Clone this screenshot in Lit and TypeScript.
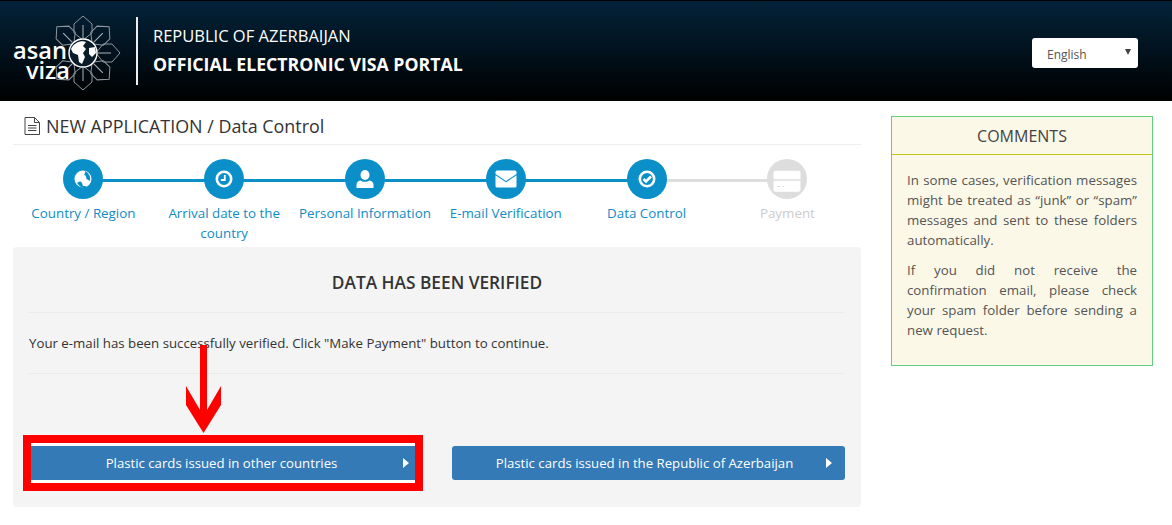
import { LitElement, html, css, svg } from "lit";
import { customElement } from "lit/decorators.js";

const petalAngles = [0, 45, 90, 135, 180, 225, 315];

const logo = html`<svg class="logo" width="136" height="100" viewBox="0 1 136 100">
  ${petalAngles.map(
    (a) => svg`<g transform="rotate(${a} 83 53)">
      <path d="M83 16 L92 24 V33 L83 40 L74 33 V24 Z" fill="none" stroke="#8d979e" stroke-width="1"/>
      <path d="M83 25 V38" stroke="#aeb6bb" stroke-width="1"/>
    </g>`
  )}
  <circle cx="83" cy="53" r="14" fill="#0b1c29" stroke="#fff" stroke-width="1.4"/>
  <path d="M71 49 C74 42 82 40 86 42 L83 46 L86 49 L83 53 L85 57 L82 64 L79 62 L78 55 L73 53 Z" fill="#fff"/>
  <path d="M89 48 L95 47 L96 53 L92 57 L89 54 Z" fill="#fff"/>
  <text x="13" y="59" class="logo-word" textLength="54" lengthAdjust="spacingAndGlyphs">asan</text>
  <text x="26" y="79" class="logo-word" textLength="44" lengthAdjust="spacingAndGlyphs">viza</text>
</svg>`;

const stepIcons = {
  globe: svg`<circle cx="12" cy="12" r="8.5" fill="#fff"/><path d="M14 4 C18 6 20 10 19 14 L15.5 12 C15 10 15 8 13 8 C14 6.500 14.500 5.500 14 4 Z M6 16 C8 14 10 14 11 16 L12 19 L15 19 L14 21 C11 21 8 19 6 16 Z" fill="#0a8fc9"/>`,
  clock: svg`<circle cx="12" cy="12" r="7.2" fill="none" stroke="#fff" stroke-width="2.6"/><path d="M12.800 8 V13 H8.800" fill="none" stroke="#fff" stroke-width="1.8"/>`,
  user: svg`<ellipse cx="12" cy="8" rx="4.500" ry="5" fill="#fff"/><path d="M3.500 21 V18 C3.500 15.500 5 14 7.500 13.500 C9 15.300 15 15.300 16.500 13.500 C19 14 20.500 15.500 20.500 18 V21 Z" fill="#fff"/>`,
  mail: svg`<path d="M1.500 5 Q1.500 3.500 3 3.500 H21 Q22.500 3.500 22.500 5 V7 L12 14 L1.500 7 Z M1.500 8.300 L12 15.300 L22.500 8.300 V19 Q22.500 20.500 21 20.500 H3 Q1.500 20.500 1.500 19 Z" fill="#fff"/>`,
  check: svg`<circle cx="12" cy="12" r="7.2" fill="none" stroke="#fff" stroke-width="2.6"/><path d="M8.500 12 L11 14.500 L16 9.500" fill="none" stroke="#fff" stroke-width="2.600"/>`,
  card: svg`<path d="M-1.500 5.700 Q-1.500 3.700 .5 3.700 H23.500 Q25.500 3.700 25.500 5.700 V12.300 H-1.500 Z M-1.500 13.700 H25.500 V22.700 Q25.500 24.700 23.500 24.700 H.5 Q-1.500 24.700 -1.500 22.700 Z" fill="#fff"/><path d="M2 19.500 H5 M7 19.500 H9" stroke="#ddd" stroke-width="1"/>`,
};

const steps = [
  { label: "Country / Region", icon: stepIcons.globe, on: true },
  { label: "Arrival date to the country", icon: stepIcons.clock, on: true },
  { label: "Personal Information", icon: stepIcons.user, on: true },
  { label: "E-mail Verification", icon: stepIcons.mail, on: true },
  { label: "Data Control", icon: stepIcons.check, on: true },
  { label: "Payment", icon: stepIcons.card, on: false },
];

@customElement("app-root")
export class AppRoot extends LitElement {
  static styles = css`
    :host {
      display: block;
      width: 1172px;
      height: 525px;
      overflow: hidden;
      background: #fff;
      font-family: "Open Sans", sans-serif;
      color: #333;
    }
    .top {
      height: 100px;
      border-top: 1px solid #000;
      display: flex;
      align-items: center;
      background: linear-gradient(#03233a, #000);
      padding-right: 34px;
    }
    .logo {
      display: block;
      flex: none;
    }
    .logo-word {
      font: 600 23px "Open Sans", sans-serif;
      fill: #fff;
    }
    .top-rule {
      width: 2px;
      height: 68px;
      background: #eee;
      margin: 0 15px 0 0;
    }
    .brand {
      flex: 1;
      color: #fff;
      padding-bottom: 2px;
    }
    .brand-sub {
      font-size: 16.5px;
      line-height: 22px;
      margin-bottom: 5px;
    }
    .brand-main {
      font-size: 17.7px;
      line-height: 24px;
      font-weight: 700;
    }
    .lang {
      width: 106px;
      height: 30px;
      margin-top: 4px;
      box-sizing: border-box;
      background: #fff;
      border-radius: 3px;
      padding: 2px 0 0 15px;
      font-size: 12px;
      color: #555;
      display: flex;
      align-items: center;
      justify-content: space-between;
    }
    .lang-arrow {
      width: 0;
      height: 0;
      margin: 0 7px 5px 0;
      border-left: 3px solid transparent;
      border-right: 3px solid transparent;
      border-top: 6px solid #444;
    }
    .page {
      display: flex;
      padding: 15px 19px 0 13px;
      gap: 30px;
    }
    main {
      width: 848px;
    }
    .title {
      height: 28px;
      box-sizing: content-box;
      border-bottom: 1px solid #eee;
      display: flex;
      align-items: flex-start;
      gap: 6px;
      padding-left: 11px;
      font-size: 17.9px;
      line-height: 20px;
      color: #333;
    }
    .title svg {
      margin-top: 1px;
    }
    .steps {
      display: grid;
      grid-template-columns: repeat(6, 140.8px);
      padding-top: 14px;
      height: 88px;
    }
    .step {
      position: relative;
      text-align: center;
      font-size: 13.35px;
      line-height: 20px;
      color: #0f8cc8;
    }
    .step::before {
      content: "";
      position: absolute;
      top: 20px;
      left: 50%;
      width: 140.8px;
      height: 3px;
      background: #0a8fc9;
    }
    .step:nth-child(5)::before {
      background: #ddd;
    }
    .step:last-child::before {
      display: none;
    }
    .step.off {
      color: #ccc;
    }
    .dot {
      position: relative;
      width: 40px;
      height: 40px;
      margin: 0 auto 4px;
      border-radius: 50%;
      background: #0a8fc9;
      display: flex;
      align-items: center;
      justify-content: center;
    }
    .dot svg {
      overflow: visible;
    }
    .step.off .dot {
      background: #ddd;
    }
    .panel {
      position: relative;
      height: 260px;
      box-sizing: border-box;
      background: #f4f4f4;
      border-radius: 4px;
      padding: 0 16px;
    }
    .panel h2 {
      margin: 0;
      height: 66px;
      display: flex;
      align-items: center;
      justify-content: center;
      border-bottom: 1px solid #eaeaea;
      font-size: 17.3px;
      font-weight: 600;
      color: #333;
      padding-top: 6px;
      box-sizing: border-box;
    }
    .panel p {
      margin: 0;
      height: 61px;
      box-sizing: border-box;
      padding-top: 20px;
      line-height: 20px;
      border-bottom: 1px solid #eaeaea;
      font-size: 13.25px;
      color: #333;
    }
    .actions {
      display: grid;
      grid-template-columns: 393px 393px;
      gap: 30px;
      margin-top: 72px;
    }
    .btn {
      height: 34px;
      background: #337ab7;
      border-radius: 3px;
      color: #fff;
      font-size: 13.2px;
      display: flex;
      align-items: center;
      justify-content: center;
      position: relative;
      padding-right: 8px;
      box-sizing: border-box;
    }
    .btn::after {
      content: "";
      position: absolute;
      right: 13px;
      top: 12px;
      border-left: 6px solid #fff;
      border-top: 5px solid transparent;
      border-bottom: 5px solid transparent;
    }
    .mark {
      position: absolute;
      left: 10px;
      top: 188px;
      width: 400px;
      height: 56px;
      box-sizing: border-box;
      border: 8px solid #fe0000;
    }
    .mark::after {
      content: "";
      position: absolute;
      inset: 0;
      border-style: solid;
      border-color: #fff;
      border-width: 3px 0;
    }
    .arrow {
      position: absolute;
      left: 173px;
      top: 98px;
    }
    aside {
      width: 262px;
      height: 250px;
      box-sizing: border-box;
      border: 1px solid #5fce7e;
      background: #fbf8e8;
      color: #555;
    }
    aside h3 {
      margin: 0;
      height: 38px;
      box-sizing: border-box;
      display: flex;
      align-items: center;
      justify-content: center;
      border-bottom: 1px solid #c5c51c;
      font-size: 16px;
      font-weight: 400;
      color: #444;
    }
    .notes {
      padding: 15px 15px 0;
      font-size: 13.3px;
      line-height: 20px;
      text-align: justify;
    }
    .notes p {
      margin: 0 0 10px;
    }
  `;

  render() {
    return html`
      <header class="top">
        ${logo}
        <div class="top-rule"></div>
        <div class="brand">
          <div class="brand-sub">REPUBLIC OF AZERBAIJAN</div>
          <div class="brand-main">OFFICIAL ELECTRONIC VISA PORTAL</div>
        </div>
        <div class="lang">English<span class="lang-arrow"></span></div>
      </header>
      <div class="page">
        <main>
          <div class="title">
            <svg width="16" height="18" viewBox="0 0 16 18">
              <path d="M1 .5 H10.5 L15.5 5.5 V17.5 H1 Z M10.5 .5 V5.5 H15.5" fill="#fff" stroke="#444" stroke-width="1"/>
              <path d="M4 8.5 H12.5 M4 11 H12.5 M4 13.5 H12.5" stroke="#444" stroke-width="1"/>
            </svg>
            NEW APPLICATION / Data Control
          </div>
          <div class="steps">
            ${steps.map(
              (s) => html`<div class="step ${s.on ? "" : "off"}">
                <div class="dot">
                  <svg width="24" height="24" viewBox="0 0 24 24">${s.icon}</svg>
                </div>
                ${s.label}
              </div>`
            )}
          </div>
          <section class="panel">
            <h2>DATA HAS BEEN VERIFIED</h2>
            <p>Your e-mail has been successfully verified. Click "Make Payment" button to continue.</p>
            <div class="actions">
              <div class="btn">Plastic cards issued in other countries</div>
              <div class="btn">Plastic cards issued in the Republic of Azerbaijan</div>
            </div>
            <div class="mark"></div>
            <svg class="arrow" width="35" height="90" viewBox="0 0 35 90">
              <path d="M14 0 H21 V65 L35 41 V60 L17.5 88 L0 60 V41 L14 65 Z" fill="#fe0000"/>
            </svg>
          </section>
        </main>
        <aside>
          <h3>COMMENTS</h3>
          <div class="notes">
            <p>In some cases, verification messages might be treated as “junk” or “spam” messages and sent to these folders automatically.</p>
            <p>If you did not receive the confirmation email, please check your spam folder before sending a new request.</p>
          </div>
        </aside>
      </div>
    `;
  }
}
